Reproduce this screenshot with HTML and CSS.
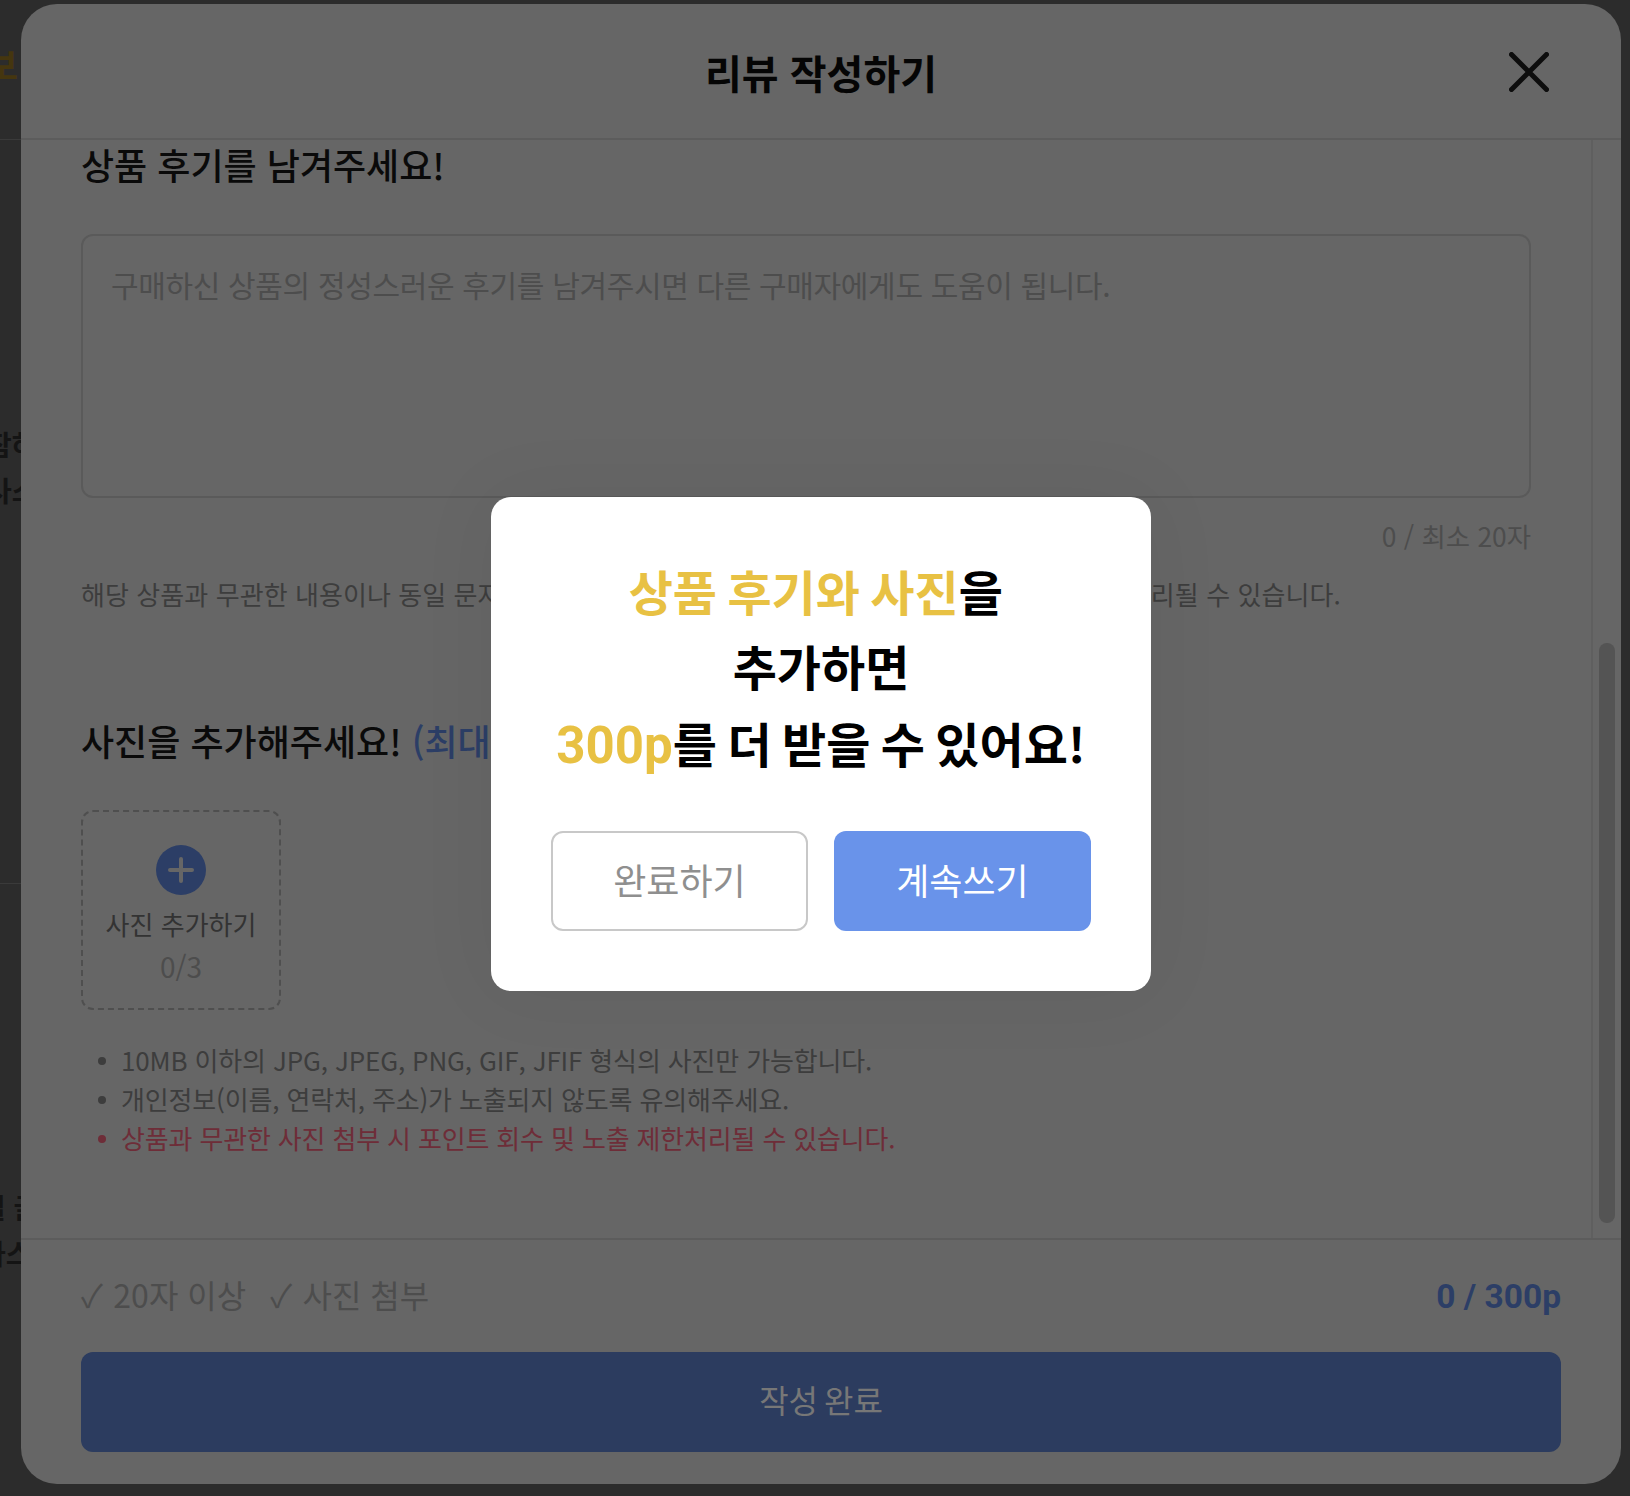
FILE: index.html
```html
<!DOCTYPE html>
<html lang="ko">
<head>
  <meta charset="UTF-8" />
  <meta name="viewport" content="width=device-width, initial-scale=1.0"/>
  <title>리뷰 작성하기</title>
  <link rel="stylesheet" href="styles.css">
</head>
<body>
  <!-- what shows of the page behind the review sheet -->
  <div class="page-edge">
    <div class="edge-head"><span class="edge-gold">보</span></div>
    <div class="edge-text edge-text-a">참하<br>사스</div>
    <div class="edge-text edge-text-b">일&nbsp;글<br>사스</div>
    <div class="edge-line"></div>
  </div>

  <div class="sheet">
    <header class="sheet-head">
      <h2>리뷰 작성하기</h2>
      <button class="close-btn" aria-label="닫기">
        <svg width="40" height="40" viewBox="0 0 40 40" fill="none">
          <path d="M2.5 2.5L37.5 37.5M37.5 2.5L2.5 37.5" stroke="#0d0d0d" stroke-width="5" stroke-linecap="round"/>
        </svg>
      </button>
    </header>

    <div class="sheet-scroll">
      <div class="sheet-body">
        <h3 class="section-title">상품 후기를 남겨주세요!</h3>
        <div class="review-box">구매하신 상품의 정성스러운 후기를 남겨주시면 다른 구매자에게도 도움이 됩니다.</div>
        <div class="char-count">0 / 최소 20자</div>
        <p class="notice">해당 상품과 무관한 내용이나 동일 문자의 반복 등 부적합한 내용은 적립 포인트 회수 및 노출 제한처리될 수 있습니다.</p>

        <h3 class="section-title">사진을 추가해주세요! <span class="title-blue">(최대 3장)</span></h3>
        <div class="photo-add">
          <span class="plus-icon">
            <svg width="50" height="50" viewBox="0 0 50 50" fill="none">
              <circle cx="25" cy="25" r="25" fill="#2c3e66"/>
              <path d="M25 14V36M14 25H36" stroke="#666" stroke-width="4" stroke-linecap="round"/>
            </svg>
          </span>
          <span class="photo-label">사진 추가하기</span>
          <span class="photo-count">0/3</span>
        </div>
        <ul class="photo-rules">
          <li>10MB 이하의 JPG, JPEG, PNG, GIF, JFIF 형식의 사진만 가능합니다.</li>
          <li>개인정보(이름, 연락처, 주소)가 노출되지 않도록 유의해주세요.</li>
          <li class="warn">상품과 무관한 사진 첨부 시 포인트 회수 및 노출 제한처리될 수 있습니다.</li>
        </ul>
      </div>
      <div class="scroll-track"><div class="scroll-thumb"></div></div>
    </div>

    <footer class="sheet-foot">
      <div class="foot-row">
        <div class="checks">
          <span><i>✓</i>20자 이상</span>
          <span><i>✓</i>사진 첨부</span>
        </div>
        <div class="points">0 / 300p</div>
      </div>
      <button class="submit-btn">작성 완료</button>
    </footer>
  </div>

  <!-- alert on top of the sheet -->
  <div class="alert">
    <p class="alert-msg"><em>상품 후기와 사진</em>을&nbsp;<br>추가하면<span class="msg-last"><em class="num">300p</em>를 더 받을 수 있어요!</span></p>
    <div class="alert-btns">
      <button class="btn-done">완료하기</button>
      <button class="btn-more">계속쓰기</button>
    </div>
  </div>
</body>
</html>
```

FILE: styles.css
```css
* {
  box-sizing: border-box;
}

html, body {
  margin: 0;
  padding: 0;
  height: 100%;
}

body {
  position: relative;
  width: 1630px;
  height: 1496px;
  overflow: hidden;
  background: #2c2c2c;
  font-family: "Noto Sans CJK KR", "Noto Sans", sans-serif;
  padding: 4px 9px 12px 21px;
}

button {
  font-family: inherit;
  border: none;
  background: none;
  padding: 0;
}

/* PAGE BEHIND */
.page-edge {
  position: absolute;
  top: 0; left: 0;
  width: 21px;
  height: 100%;
  overflow: hidden;
  color: #141414;
  font-weight: 700;
  font-size: 28px;
}

.edge-head {
  height: 140px;
  border-bottom: 1px solid #3a3a3a;
  position: relative;
}

.edge-gold {
  position: absolute;
  top: 38px;
  right: 3px;
  color: #45360f;
  font-size: 36px;
}

.edge-text {
  position: absolute;
  left: -20px;
  white-space: nowrap;
  line-height: 46px;
}

.edge-text-a { top: 421px; left: -14px; }
.edge-text-b { top: 1184px; }

.edge-line {
  position: absolute;
  top: 883px;
  left: 0;
  width: 100%;
  height: 1px;
  background: #3a3a3a;
}

/* REVIEW SHEET */
.sheet {
  position: relative;
  height: 100%;
  background: #666;
  border-radius: 36px;
  display: flex;
  flex-direction: column;
  overflow: hidden;
}

.sheet-head {
  flex: none;
  height: 136px;
  padding-top: 2px;
  border-bottom: 2px solid #5c5c5c;
  display: flex;
  align-items: center;
  justify-content: center;
}

.sheet-head h2 {
  margin: 0;
  font-size: 40px;
  font-weight: 700;
  color: #050505;
}

.close-btn {
  position: absolute;
  top: 48px;
  right: 72px;
  width: 40px;
  height: 40px;
}

.sheet-scroll {
  flex: 1;
  display: flex;
  min-height: 0;
}

.sheet-body {
  flex: 1;
  padding: 0 60px;
  border-right: 2px solid #5f5f5f;
  overflow: hidden;
}

.section-title {
  margin: 0;
  font-size: 36px;
  line-height: 48px;
  font-weight: 500;
  color: #0a0a0a;
}

.title-blue {
  color: #2c3e66;
}

.review-box {
  margin-top: 46px;
  width: 1450px;
  height: 264px;
  border: 2px solid #5a5a5a;
  border-radius: 12px;
  padding: 26px 28px;
  font-size: 30px;
  line-height: 44px;
  letter-spacing: -0.34px;
  color: #4d4d4d;
}

.char-count {
  width: 1450px;
  margin-top: 18px;
  text-align: right;
  font-size: 26.4px;
  line-height: 40px;
  color: #4d4d4d;
}

.notice {
  margin: 18px 0 0;
  font-size: 26px;
  line-height: 40px;
  letter-spacing: 0.07px;
  color: #3d3d3d;
  white-space: nowrap;
}

.notice + .section-title {
  margin-top: 102px;
}

.section-title + .photo-add {
  margin-top: 46px;
}

.photo-add {
  width: 200px;
  height: 200px;
  border: 2px dashed #4f4f4f;
  border-radius: 12px;
  display: flex;
  flex-direction: column;
  align-items: center;
  padding-top: 33px;
}

.plus-icon {
  height: 50px;
  display: block;
}

.photo-label {
  margin-top: 7px;
  font-size: 26px;
  line-height: 44px;
  color: #333;
}

.photo-count {
  font-size: 28px;
  line-height: 40px;
  color: #4d4d4d;
}

.photo-rules {
  margin: 30px 0 0;
  padding: 0 0 0 17px;
  list-style: none;
  font-size: 26px;
  line-height: 39px;
  letter-spacing: -0.16px;
  color: #3d3d3d;
}

.photo-rules li {
  display: flex;
}

.photo-rules li::before {
  content: "";
  flex: none;
  width: 8px;
  height: 8px;
  margin: 17px 15px 0 0;
  border-radius: 50%;
  background: currentColor;
}

.photo-rules .warn {
  color: #6e2d38;
}

.scroll-track {
  flex: none;
  width: 28px;
  position: relative;
}

.scroll-thumb {
  position: absolute;
  top: 503px;
  left: 6px;
  width: 16px;
  height: 580px;
  border-radius: 8px;
  background: #545454;
}

/* FOOTER */
.sheet-foot {
  flex: none;
  height: 246px;
  border-top: 2px solid #5c5c5c;
  padding: 0 60px;
}

.foot-row {
  height: 112px;
  display: flex;
  align-items: center;
  justify-content: space-between;
}

.checks {
  display: flex;
  gap: 24px;
  margin-bottom: 4px;
  font-size: 32px;
  color: #4d4d4d;
}

.checks i {
  font-style: normal;
  margin-right: 10.5px;
}

.points {
  font-family: Roboto, "Noto Sans CJK KR", sans-serif;
  font-size: 33.5px;
  font-weight: 700;
  color: #2c3e66;
}

.submit-btn {
  display: block;
  width: 100%;
  height: 100px;
  padding-bottom: 6px;
  border-radius: 12px;
  background: #2c3c5f;
  color: #777;
  font-size: 32px;
  word-spacing: -3px;
}

/* ALERT */
.alert {
  position: absolute;
  top: 497px;
  left: 491px;
  width: 660px;
  height: 494px;
  background: #fff;
  border-radius: 20px;
  padding: 56px 60px 0;
  box-shadow: 0 0 80px rgba(0,0,0,0.06);
}

.alert-msg {
  margin: 0;
  text-align: center;
  white-space: nowrap;
  font-size: 48px;
  line-height: 75px;
  font-weight: 700;
  word-spacing: -3px;
  color: #000;
}

.alert-msg em {
  font-style: normal;
  color: #e8c143;
}

.alert-msg .num {
  font-family: Roboto, "Noto Sans CJK KR", sans-serif;
  font-size: 51px;
  line-height: 1;
}

.msg-last {
  display: block;
  margin-top: 2px;
}

.alert-btns {
  display: flex;
  gap: 26px;
  margin-top: 51px;
}

.alert-btns button {
  flex: none;
  width: 257px;
  height: 100px;
  padding-bottom: 4px;
  border-radius: 12px;
  font-size: 36px;
}

.alert-btns .btn-done {
  background: #fff;
  border: 2px solid #c8c8c8;
  color: #8f8f8f;
}

.alert-btns .btn-more {
  background: #6993ea;
  color: #fff;
}
```
